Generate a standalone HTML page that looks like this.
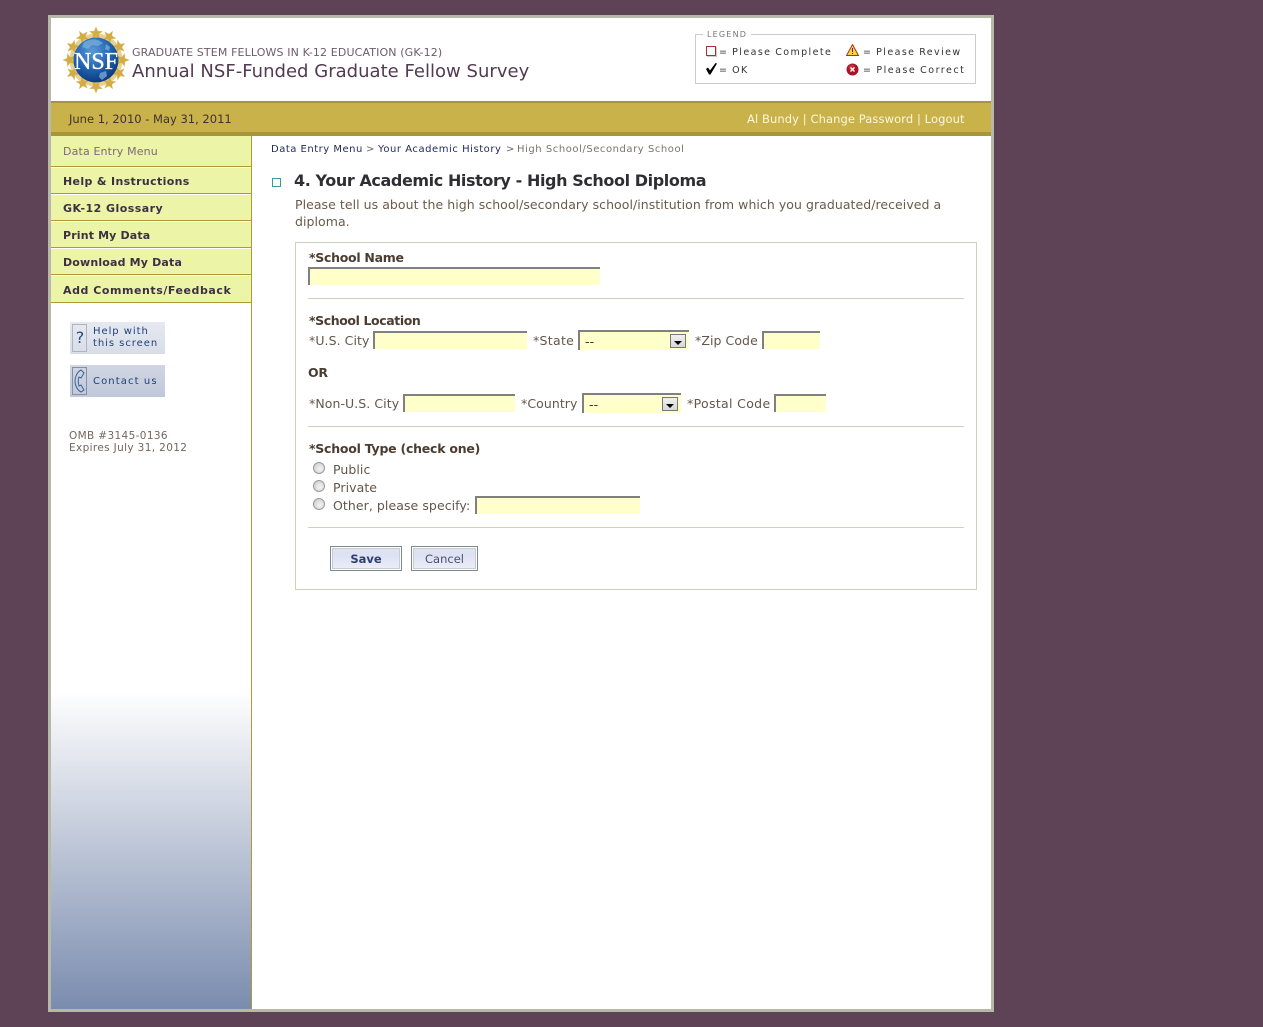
<!DOCTYPE html>
<html><head><meta charset="utf-8"><title>Annual NSF-Funded Graduate Fellow Survey</title>
<style>
html,body{margin:0;padding:0;width:1263px;height:1027px;overflow:hidden;background:#5e4256}
body{position:relative;font-family:"DejaVu Sans","Liberation Sans",sans-serif;color:#5a4a3c}
div,span.a,svg{position:absolute}
.t{white-space:nowrap;line-height:14px}
.nav{left:63px;font-size:11px;font-weight:bold;color:#3d3040;letter-spacing:.3px}
.ln{left:51px;width:200px;height:1px;background:#ad9a35}
.lw{left:51px;width:200px;height:1px;background:#fff}
.in{background:#ffffcc;border-top:2px solid #808080;border-left:2px solid #808080;box-sizing:border-box;height:18px}
.l{font-size:12.5px;color:#64564a;letter-spacing:.07px}
.b{font-size:12.5px;font-weight:bold;color:#4a3c30;letter-spacing:-.28px}
.hr{left:308px;width:656px;height:1px;background:#d0d0bc}
.lg{font-size:9.5px;letter-spacing:1.4px;word-spacing:-.6px;color:#333}
.arr{width:16px;height:14px;background:linear-gradient(#f0f0f0,#d8d8d8);border:1px solid #777;box-sizing:border-box}
.arr:after{content:"";position:absolute;left:3px;top:6px;border-left:4px solid transparent;border-right:4px solid transparent;border-top:4px solid #000}
.r{width:12px;height:12px;border-radius:50%;border:1px solid #9a9a9a;background:radial-gradient(circle at 60% 60%,#f4f4f4,#c8c8c8);box-sizing:border-box}
.btn{border:1px solid #7d8a8f;outline:1px solid #fff;outline-offset:-2px;box-sizing:border-box;background:linear-gradient(#dfe2f3,#dfe2f3 40%,#eceef8);text-align:center;box-shadow:inset 0 0 0 2px #c8ced0}
</style></head><body>
<div style="left:48px;top:15px;width:946px;height:997px;background:#b8b8a8"></div>
<div style="left:51px;top:18px;width:940px;height:991px;background:#fff"></div>

<svg style="left:62px;top:26px" width="68" height="68" viewBox="0 0 68 68">
<circle cx="34" cy="34" r="26.500" fill="#e6d28e"/>
<g fill="#d3ac45" stroke="#e8d9a0" stroke-width=".3">
<path id="s" d="M34 .5L35.800 5 40.800 5.200 36.900 8.200 38.200 13 34 10.400 29.800 13 31.100 8.200 27.200 5.200 32.200 5z"/>
<use href="#s" transform="rotate(30 34 34)"/><use href="#s" transform="rotate(60 34 34)"/><use href="#s" transform="rotate(90 34 34)"/><use href="#s" transform="rotate(120 34 34)"/><use href="#s" transform="rotate(150 34 34)"/><use href="#s" transform="rotate(180 34 34)"/><use href="#s" transform="rotate(210 34 34)"/><use href="#s" transform="rotate(240 34 34)"/><use href="#s" transform="rotate(270 34 34)"/><use href="#s" transform="rotate(300 34 34)"/><use href="#s" transform="rotate(330 34 34)"/>
</g>
<defs><radialGradient id="g" cx=".42" cy=".3" r=".8"><stop offset="0" stop-color="#5b9ad8"/><stop offset=".55" stop-color="#1c5eab"/><stop offset="1" stop-color="#0b2c6c"/></radialGradient></defs>
<circle cx="34" cy="34" r="22.500" fill="url(#g)"/>
<path d="M22 16q8-4 14-2l5 3-5 3-6-1-4 4-6-2zM38 47l6-2 1 5-5 4-3-3zM44 18l4 3-1 4-4-2z" fill="#7aaedc" opacity=".75"/>
<text x="34" y="43" text-anchor="middle" font-family="Liberation Serif,serif" font-size="24" fill="#fff" stroke="#fff" stroke-width=".35" textLength="44" lengthAdjust="spacingAndGlyphs">NSF</text>
</svg>

<div class="t" style="left:132px;top:46px;font-size:11px;letter-spacing:.13px;color:#6e5c66">GRADUATE STEM FELLOWS IN K-12 EDUCATION (GK-12)</div>
<div class="t" style="left:132px;top:61px;font-size:18px;line-height:22px;letter-spacing:.02px;color:#523a50">Annual NSF-Funded Graduate Fellow Survey</div>

<div style="left:695px;top:34px;width:281px;height:50px;border:1px solid #ccc;box-sizing:border-box"></div>
<div class="t" style="left:703px;top:28px;background:#fff;padding:0 4px;font-size:8px;letter-spacing:1.200px;color:#777">LEGEND</div>
<div style="left:706px;top:46px;width:10px;height:10px;border:1px solid #a83030;box-sizing:border-box;box-shadow:1px 1px 0 #ccc"></div>
<div class="t lg" style="left:719px;top:46px">= Please Complete</div>
<svg style="left:705px;top:62px" width="13" height="13" viewBox="0 0 13 13"><path d="M1 7l2-1.500 2 3L10.500 1 12 1.500 5.500 12.500H4z" fill="#000"/></svg>
<div class="t lg" style="left:719px;top:64px">= OK</div>
<svg style="left:846px;top:44px" width="13" height="12" viewBox="0 0 13 12"><path d="M6.500 .5L12.500 11.500H.5z" fill="#f2d840" stroke="#b03020" stroke-width="1"/><path d="M6 4h1v4H6zM6 9h1v1H6z" fill="#702010"/></svg>
<div class="t lg" style="left:863px;top:46px">= Please Review</div>
<svg style="left:846px;top:63px" width="13" height="13" viewBox="0 0 13 13"><circle cx="6.500" cy="6.500" r="6" fill="#a81525"/><circle cx="5.500" cy="4.500" r="3" fill="#d84050" opacity=".6"/><path d="M4.500 4.500l4 4M8.500 4.500l-4 4" stroke="#fff" stroke-width="1.400"/></svg>
<div class="t lg" style="left:863px;top:64px;letter-spacing:1.5px">= Please Correct</div>

<div style="left:51px;top:101px;width:940px;height:35px;background:#c9b24a"></div>
<div style="left:51px;top:101px;width:940px;height:2px;background:#a8953a"></div>
<div style="left:51px;top:132px;width:940px;height:4px;background:#a8953a"></div>
<div class="t" style="left:69px;top:112px;font-size:11.500px;color:#3e3230">June 1, 2010 - May 31, 2011</div>
<div class="t" style="left:747px;top:112px;font-size:11.500px;letter-spacing:.09px;color:#fbf7dc">Al Bundy | Change Password | Logout</div>

<div style="left:51px;top:136px;width:200px;height:873px;background:linear-gradient(#fff,#fff 554px,#7a8cae)"></div>
<div style="left:51px;top:136px;width:200px;height:166px;background:#ecf4a8"></div>
<div style="left:251px;top:136px;width:1px;height:873px;background:#ad9a35"></div>
<div class="t" style="left:63px;top:145px;font-size:11px;letter-spacing:.14px;color:#7b6a78">Data Entry Menu</div>
<div class="ln" style="top:166px"></div><div class="lw" style="top:167px"></div>
<div class="t nav" style="top:175px;letter-spacing:.35px">Help &amp; Instructions</div>
<div class="ln" style="top:193px"></div><div class="lw" style="top:194px"></div>
<div class="t nav" style="top:202px;letter-spacing:.45px">GK-12 Glossary</div>
<div class="ln" style="top:220px"></div><div class="lw" style="top:221px"></div>
<div class="t nav" style="top:229px;letter-spacing:.15px">Print My Data</div>
<div class="ln" style="top:247px"></div><div class="lw" style="top:248px"></div>
<div class="t nav" style="top:256px;letter-spacing:.17px">Download My Data</div>
<div class="ln" style="top:274px"></div><div class="lw" style="top:275px"></div>
<div class="t nav" style="top:284px;letter-spacing:.55px">Add Comments/Feedback</div>
<div class="ln" style="top:302px"></div>

<div style="left:70px;top:322px;width:95px;height:32px;background:linear-gradient(#e6e9f0,#d8dde8)"></div>
<div style="left:72px;top:324px;width:15px;height:28px;border:1px solid #b0b4c0;box-sizing:border-box"></div>
<div class="t" style="left:74px;top:331px;width:12px;text-align:center;font-size:16px;color:#2a4a80">?</div>
<div class="t" style="left:93px;top:326px;font-size:10px;line-height:12px;letter-spacing:.95px;color:#1f3f78">Help with<br>this screen</div>
<div style="left:70px;top:365px;width:95px;height:32px;background:linear-gradient(#d0d6e2,#c0c8da)"></div>
<div style="left:72px;top:367px;width:15px;height:28px;border:1px solid #858fa5;box-sizing:border-box"></div>
<svg style="left:74px;top:369px" width="11" height="24" viewBox="0 0 11 24"><path d="M7 1C3 3 1 8 1 12s2 9 6 11l3-2-3-5-2 1c-1-3-1-7 0-9l2 1 3-5z" fill="none" stroke="#3a6098" stroke-width="1"/></svg>
<div class="t" style="left:93px;top:375px;font-size:10px;letter-spacing:1.100px;color:#1f3f78">Contact us</div>
<div class="t" style="left:69px;top:430px;font-size:10.500px;line-height:12px;letter-spacing:.36px;color:#74665e">OMB #3145-0136<br>Expires July 31, 2012</div>

<div class="t" style="left:271px;top:143px;font-size:10px;letter-spacing:.5px;color:#1c2a5c">Data Entry Menu</div>
<div class="t" style="left:366px;top:143px;font-size:10px;color:#666">&gt;</div>
<div class="t" style="left:378px;top:143px;font-size:10px;letter-spacing:.54px;color:#1c2a5c">Your Academic History</div>
<div class="t" style="left:506px;top:143px;font-size:10px;color:#666">&gt;</div>
<div class="t" style="left:517px;top:143px;font-size:10px;letter-spacing:.55px;color:#7c7270">High School/Secondary School</div>

<div style="left:272px;top:178px;width:7px;height:7px;border:1px solid #3a97a8;box-sizing:content-box"></div>
<div class="t" style="left:294px;top:170px;font-size:16px;line-height:22px;font-weight:bold;letter-spacing:-.41px;color:#2e2e34">4. Your Academic History - High School Diploma</div>
<div class="t" style="left:295px;top:196px;font-size:12.500px;line-height:17px;letter-spacing:.05px;color:#6a5a4a">Please tell us about the high school/secondary school/institution from which you graduated/received a<br>diploma.</div>

<div style="left:295px;top:242px;width:682px;height:348px;border:1px solid #d0d0bc;box-sizing:border-box"></div>
<div class="t b" style="left:309px;top:251px">*School Name</div>
<div class="in" style="left:308px;top:267px;width:292px"></div>
<div class="hr" style="top:298px"></div>

<div class="t b" style="left:309px;top:314px;letter-spacing:-.4px">*School Location</div>
<div class="t l" style="left:309px;top:334px">*U.S. City</div>
<div class="in" style="left:373px;top:331px;width:154px"></div>
<div class="t l" style="left:533px;top:334px;letter-spacing:.3px">*State</div>
<div class="in" style="left:578px;top:330px;width:111px;height:20px"></div>
<div class="t l" style="left:585px;top:335px;color:#333">--</div>
<div class="arr" style="left:670px;top:334px"></div>
<div class="t l" style="left:695px;top:334px">*Zip Code</div>
<div class="in" style="left:762px;top:331px;width:58px"></div>
<div class="t b" style="left:308px;top:366px">OR</div>
<div class="t l" style="left:309px;top:397px">*Non-U.S. City</div>
<div class="in" style="left:403px;top:394px;width:112px"></div>
<div class="t l" style="left:521px;top:397px">*Country</div>
<div class="in" style="left:582px;top:393px;width:99px;height:20px"></div>
<div class="t l" style="left:589px;top:398px;color:#333">--</div>
<div class="arr" style="left:662px;top:397px"></div>
<div class="t l" style="left:687px;top:397px;letter-spacing:.33px">*Postal Code</div>
<div class="in" style="left:774px;top:394px;width:52px"></div>
<div class="hr" style="top:426px"></div>

<div class="t b" style="left:309px;top:442px;letter-spacing:-.24px">*School Type (check one)</div>
<div class="r" style="left:313px;top:462px"></div>
<div class="t l" style="left:333px;top:463px">Public</div>
<div class="r" style="left:313px;top:480px"></div>
<div class="t l" style="left:333px;top:481px">Private</div>
<div class="r" style="left:313px;top:498px"></div>
<div class="t l" style="left:333px;top:499px">Other, please specify:</div>
<div class="in" style="left:475px;top:496px;width:165px"></div>
<div class="hr" style="top:527px"></div>

<div class="btn t" style="left:330px;top:546px;width:72px;height:25px;line-height:25px;font-size:11.500px;font-weight:bold;color:#2e3f70">Save</div>
<div class="btn t" style="left:411px;top:546px;width:67px;height:25px;line-height:25px;font-size:11.500px;color:#4a5070">Cancel</div>
</body></html>
